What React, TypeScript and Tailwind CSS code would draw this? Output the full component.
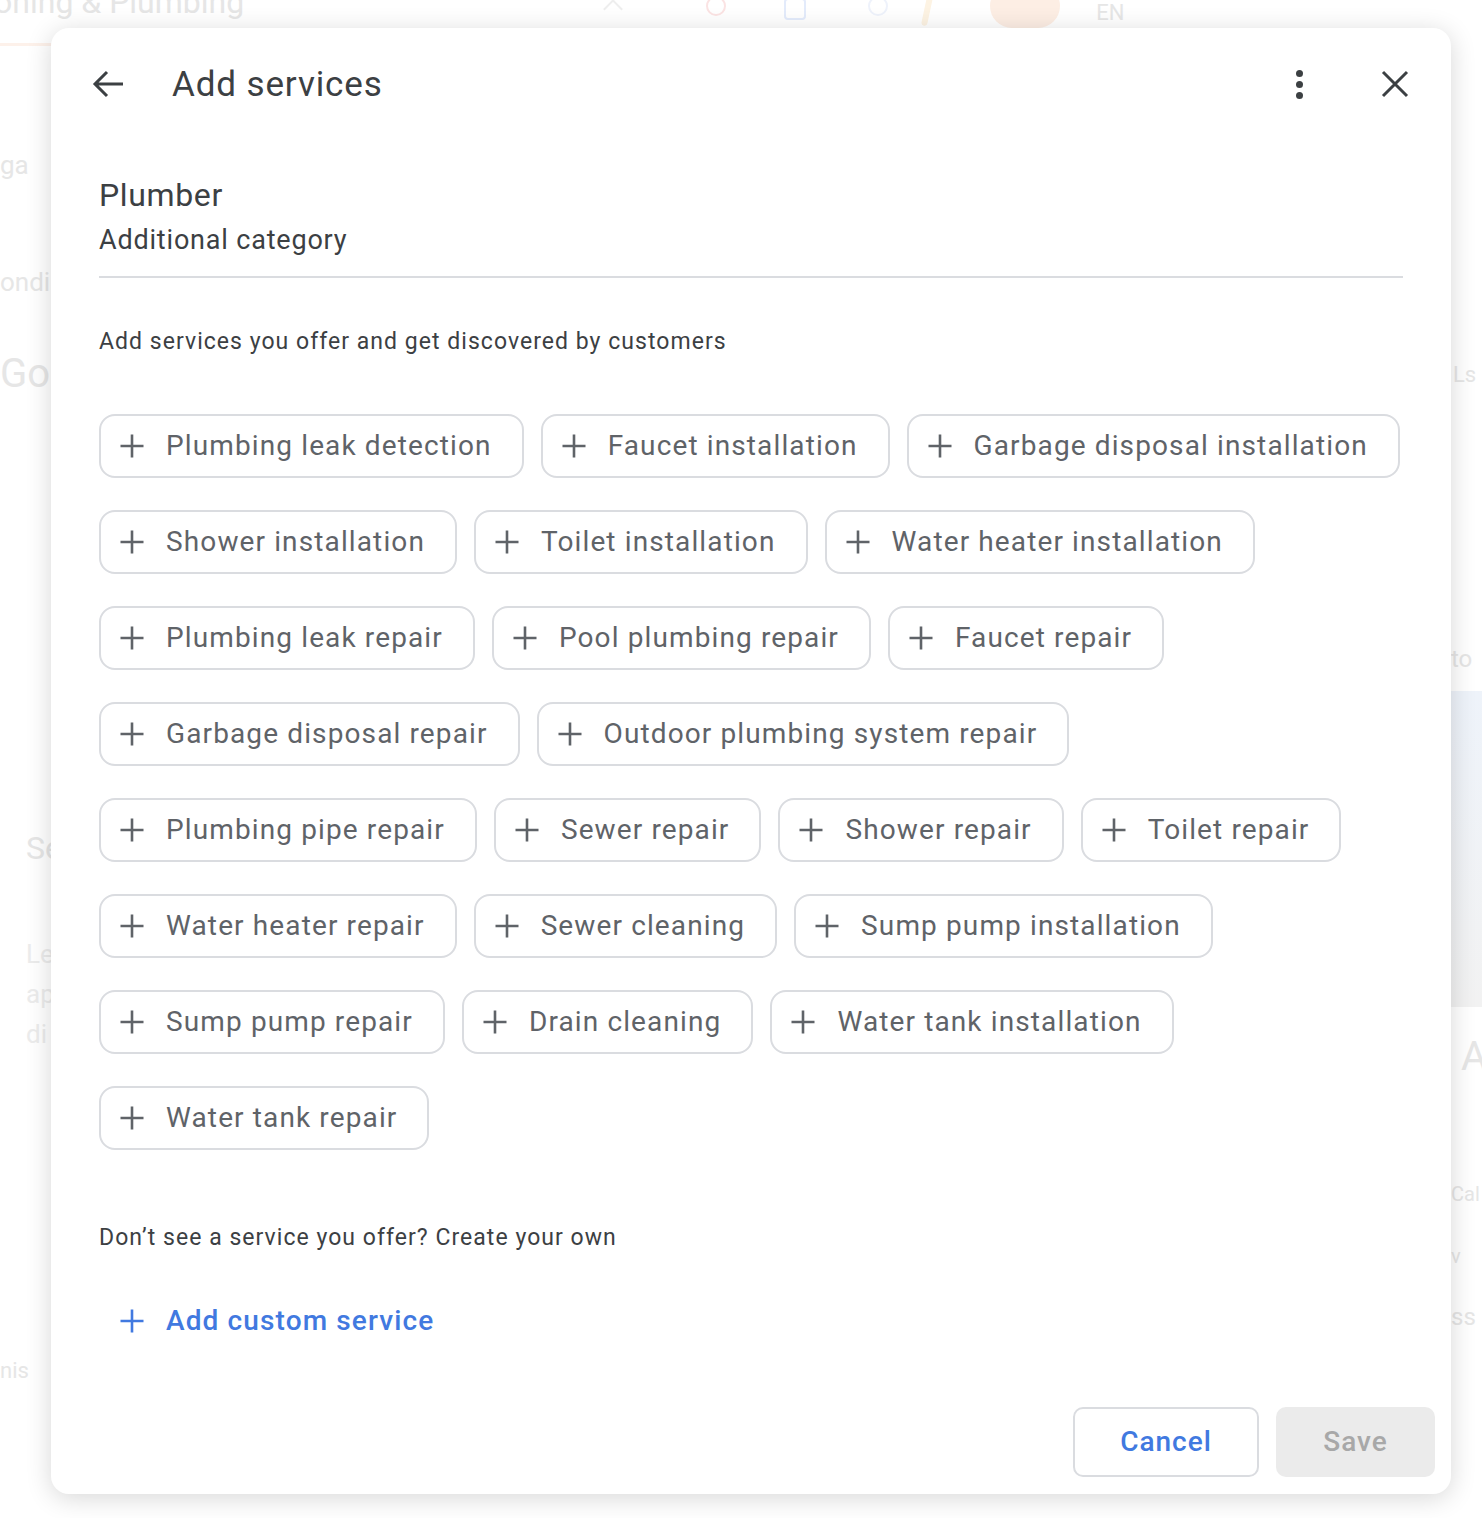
import React from "react";

const rows: string[][] = [
  ["Plumbing leak detection", "Faucet installation", "Garbage disposal installation"],
  ["Shower installation", "Toilet installation", "Water heater installation"],
  ["Plumbing leak repair", "Pool plumbing repair", "Faucet repair"],
  ["Garbage disposal repair", "Outdoor plumbing system repair"],
  ["Plumbing pipe repair", "Sewer repair", "Shower repair", "Toilet repair"],
  ["Water heater repair", "Sewer cleaning", "Sump pump installation"],
  ["Sump pump repair", "Drain cleaning", "Water tank installation"],
  ["Water tank repair"],
];

function PlusIcon({ className }: { className?: string }) {
  return (
    <svg viewBox="0 0 26 26" className={className} fill="none">
      <path d="M13 1.5v23M1.5 13h23" stroke="currentColor" strokeWidth="2.6" />
    </svg>
  );
}

function Chip({ label }: { label: string }) {
  return (
    <button className="flex h-[64px] items-center gap-[21px] rounded-[16px] border-2 border-[#dadce0] bg-white pl-[18px] pr-[30px] text-[#5f6368]">
      <PlusIcon className="h-[26px] w-[26px]" />
      <span className="text-[28px] leading-none tracking-[0.04em]">{label}</span>
    </button>
  );
}

function Faint({ children, className }: { children: React.ReactNode; className?: string }) {
  return <div className={"whitespace-nowrap text-[#e6e6e6] " + (className || "")}>{children}</div>;
}

export default function App() {
  return (
    <div
      className="h-[1518px] w-[1482px] overflow-hidden bg-white"
      style={{ fontFamily: "Roboto, 'Liberation Sans', sans-serif" }}
    >
      {/* faded page behind the dialog */}
      <div className="flex h-[28px] items-start overflow-visible">
        <Faint className="-ml-[6px] -mt-[22px] text-[32px]">oning &amp; Plumbing</Faint>
        <div className="ml-[362px] mt-[2px] h-[14px] w-[14px] rotate-45 border-l-2 border-t-2 border-[#eeeeee]" />
        <div className="ml-[86px] -mt-[4px] h-[20px] w-[20px] rounded-full border-2 border-[#fbe3e3]" />
        <div className="ml-[58px] -mt-[2px] h-[22px] w-[22px] rounded-[4px] border-2 border-[#e3ebfb]" />
        <div className="ml-[62px] -mt-[4px] h-[20px] w-[20px] rounded-full border-2 border-[#eef2fb]" />
        <div className="ml-[36px] -mt-[4px] h-[30px] w-[6px] rotate-12 rounded bg-[#fdf3e3]" />
        <div className="ml-[60px] -mt-[16px] h-[44px] w-[70px] rounded-full bg-[#fdeee4]" />
        <Faint className="ml-[36px] mt-[2px] text-[22px] leading-none">EN</Faint>
      </div>

      <div className="flex">
        <div className="w-[51px] shrink-0 overflow-hidden">
          <div className="mt-[15px] h-[3px] w-[60px] bg-[#fdf1ea]" />
          <Faint className="mt-[100px] text-[26px]">ga</Faint>
          <Faint className="mt-[78px] text-[26px]">ondi</Faint>
          <Faint className="mt-[42px] text-[40px]">Go</Faint>
          <Faint className="ml-[26px] mt-[420px] text-[32px]">Se</Faint>
          <div className="ml-[26px] mt-[62px] text-[26px] leading-[40px] text-[#ececec]">
            <div>Le</div>
            <div>ap</div>
            <div>di</div>
          </div>
          <Faint className="mt-[300px] text-[22px]">nis</Faint>
        </div>

        {/* dialog */}
        <div className="relative z-10 flex h-[1466px] w-[1400px] shrink-0 flex-col rounded-[18px] bg-white shadow-[0_4px_26px_rgba(0,0,0,0.16)]">
          <div className="flex h-[112px] items-center pl-[41px] pr-[42px]">
            <svg viewBox="0 0 32 28" className="h-[28px] w-[32px] text-[#3c4043]" fill="none">
              <path d="M31 14H3M15 2L3 14l12 12" stroke="currentColor" strokeWidth="3" />
            </svg>
            <div className="ml-[48px] text-[35px] leading-none tracking-[0.025em] text-[#3c4043]">Add services</div>
            <div className="ml-auto flex flex-col gap-[4px]">
              <div className="h-[7px] w-[7px] rounded-full bg-[#3c4043]" />
              <div className="h-[7px] w-[7px] rounded-full bg-[#3c4043]" />
              <div className="h-[7px] w-[7px] rounded-full bg-[#3c4043]" />
            </div>
            <svg viewBox="0 0 28 28" className="ml-[78px] h-[28px] w-[28px] text-[#3c4043]" fill="none">
              <path d="M2 2l24 24M26 2L2 26" stroke="currentColor" strokeWidth="3" />
            </svg>
          </div>

          <div className="px-[48px]">
            <div className="mt-[37px] text-[32px] leading-[36px] tracking-[0.02em] text-[#3c4043]">Plumber</div>
            <div className="mt-[11px] text-[27px] leading-[32px] tracking-[0.03em] text-[#3c4043]">
              Additional category
            </div>
            <div className="mt-[20px] h-[2px] bg-[#dadce0]" />

            <div className="mt-[49px] text-[23px] leading-[30px] tracking-[0.045em] text-[#3c4043]">
              Add services you offer and get discovered by customers
            </div>

            <div className="mt-[57px] flex flex-col gap-[32px]">
              {rows.map((row, i) => (
                <div key={i} className="flex gap-[17px]">
                  {row.map((s) => (
                    <Chip key={s} label={s} />
                  ))}
                </div>
              ))}
            </div>

            <div className="mt-[73px] text-[23px] leading-[30px] tracking-[0.045em] text-[#3c4043]">
              Don’t see a service you offer? Create your own
            </div>

            <button className="mt-[54px] flex items-center gap-[21px] pl-[20px] text-[#4179e0]">
              <PlusIcon className="h-[26px] w-[26px]" />
              <span className="text-[28px] font-medium leading-none tracking-[0.04em]">Add custom service</span>
            </button>
          </div>

          <div className="mt-auto flex justify-end gap-[17px] pb-[17px] pr-[16px]">
            <button className="flex h-[70px] w-[186px] items-center justify-center rounded-[10px] border-2 border-[#dadce0] text-[28px] font-medium tracking-[0.035em] text-[#4179e0]">
              Cancel
            </button>
            <button className="flex h-[70px] w-[159px] items-center justify-center rounded-[10px] bg-[#ebebeb] text-[28px] font-medium tracking-[0.035em] text-[#a8a8a8]">
              Save
            </button>
          </div>
        </div>

        <div className="w-[31px] shrink-0 overflow-hidden">
          <Faint className="ml-[2px] mt-[330px] text-[22px]">Ls</Faint>
          <Faint className="mt-[250px] text-[24px]">to</Faint>
          <div className="mt-[14px] h-[316px] bg-gradient-to-b from-[#eef3fa] to-[#f2f2f2]" />
          <Faint className="ml-[10px] mt-[30px] text-[40px] leading-none">A</Faint>
          <Faint className="mt-[102px] text-[20px]">Cal</Faint>
          <Faint className="mt-[32px] text-[20px]">v</Faint>
          <Faint className="mt-[28px] text-[24px]">ss</Faint>
        </div>
      </div>
    </div>
  );
}
